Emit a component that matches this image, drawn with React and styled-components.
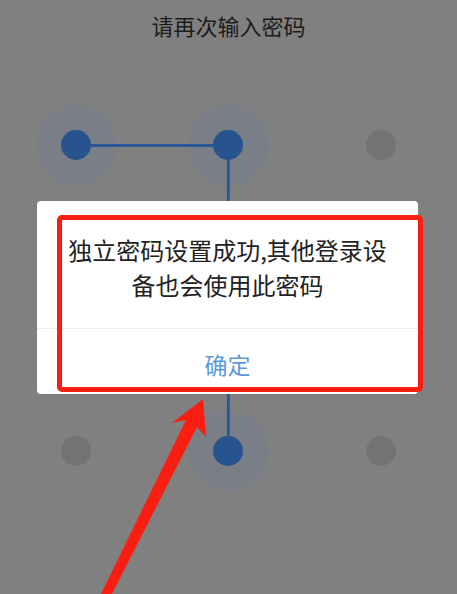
import styled, { createGlobalStyle } from 'styled-components';

const GlobalStyle = createGlobalStyle`
  html, body {
    margin: 0;
    padding: 0;
    background: #808080;
  }
  * {
    box-sizing: border-box;
  }
`;

const Screen = styled.div`
  position: relative;
  width: 457px;
  height: 594px;
  overflow: hidden;
  background: #808080;
  font-family: 'Noto Sans CJK SC', 'Noto Sans', sans-serif;
`;

const Title = styled.div`
  height: 68px;
  padding-top: 10px;
  text-align: center;
  font-size: 22px;
  line-height: 30px;
  color: #1c1c1c;
`;

const PatternArea = styled.div`
  position: relative;
  display: grid;
  grid-template-columns: repeat(3, 152.33px);
  grid-template-rows: repeat(3, 153px);
  margin-top: 0.5px;
`;

const Cell = styled.div`
  position: relative;
  display: flex;
  align-items: center;
  justify-content: center;
  z-index: 1;
`;

const Halo = styled.div`
  width: 81px;
  height: 81px;
  border-radius: 50%;
  display: flex;
  align-items: center;
  justify-content: center;
  background: ${p => (p.$selected ? '#7a7e86' : 'transparent')};
`;

const Dot = styled.div`
  width: 30px;
  height: 30px;
  border-radius: 50%;
  background: ${p => (p.$selected ? '#27548e' : '#737373')};
`;

const Lines = styled.svg`
  position: absolute;
  inset: 0;
  width: 100%;
  height: 100%;
  z-index: 2;
  pointer-events: none;
`;

const Dialog = styled.div`
  position: absolute;
  left: 37px;
  top: 201px;
  width: 381px;
  height: 193px;
  background: #fff;
  border-radius: 4px;
  display: flex;
  flex-direction: column;
  z-index: 5;
`;

const Message = styled.div`
  padding: 31px 28px 0;
  height: 128px;
  text-align: center;
  font-size: 24px;
  line-height: 35px;
  color: #222;
  border-bottom: 1px solid #ececec;
`;

const ConfirmButton = styled.button`
  flex: 1;
  border: none;
  background: transparent;
  font-family: inherit;
  font-size: 23px;
  color: #5b9ad8;
  padding: 4px 0 0;
  cursor: pointer;
`;

const Highlight = styled.div`
  position: absolute;
  left: 57px;
  top: 215px;
  width: 366px;
  height: 177px;
  border: 5px solid #fa1e12;
  border-radius: 5px;
  z-index: 6;
  pointer-events: none;
`;

const Arrow = styled.svg`
  position: absolute;
  left: 0;
  top: 0;
  width: 457px;
  height: 594px;
  z-index: 7;
  pointer-events: none;
`;

const nodes = [true, true, false, false, true, false, false, true, false];

export default function App() {
  const cx = i => 76 + i * 152.33;
  const cy = i => 76.5 + i * 153;

  return (
    <>
      <GlobalStyle />
      <Screen>
        <Title>请再次输入密码</Title>
        <PatternArea>
          {nodes.map((sel, i) => (
            <Cell key={i}>
              <Halo $selected={sel}>
                <Dot $selected={sel} />
              </Halo>
            </Cell>
          ))}
          <Lines viewBox="0 0 457 459">
            <g stroke="#2a5895" strokeWidth="3" strokeLinecap="butt" fill="none">
              <line x1={cx(0) + 14} y1={cy(0)} x2={cx(1) - 14} y2={cy(0)} />
              <line x1={cx(1)} y1={cy(0) + 14} x2={cx(1)} y2={cy(2) - 14} />
            </g>
          </Lines>
        </PatternArea>

        <Dialog>
          <Message>独立密码设置成功,其他登录设备也会使用此密码</Message>
          <ConfirmButton>确定</ConfirmButton>
        </Dialog>

        <Highlight />

        <Arrow viewBox="0 0 457 594">
          <polygon
            fill="#fa1e12"
            points="203,399 206,437 197,427 112,594 101,594 186,420 172,423"
          />
        </Arrow>
      </Screen>
    </>
  );
}
